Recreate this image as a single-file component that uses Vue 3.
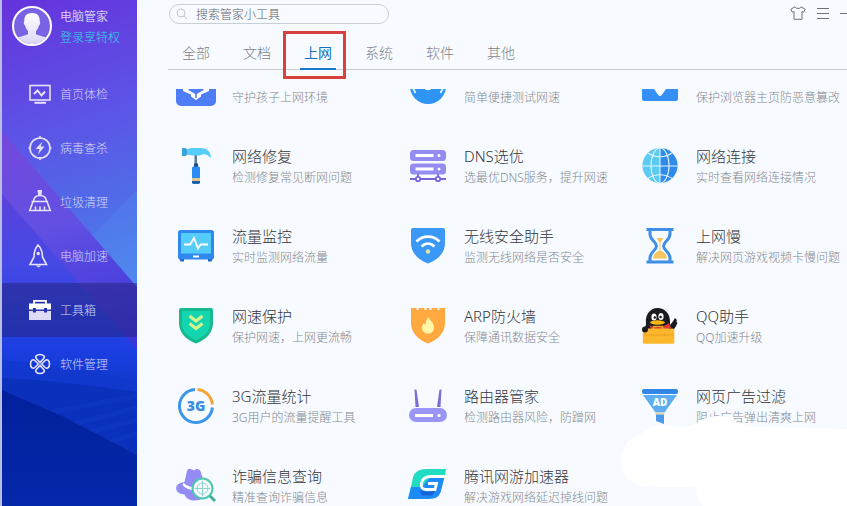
<script setup>
import { ref, onMounted } from 'vue'

const menu = [
  { id: 'check', label: '首页体检' },
  { id: 'virus', label: '病毒查杀' },
  { id: 'clean', label: '垃圾清理' },
  { id: 'boost', label: '电脑加速' },
  { id: 'tools', label: '工具箱' },
  { id: 'apps', label: '软件管理' },
]
const activeMenu = ref('tools')

const tabs = ['全部', '文档', '上网', '系统', '软件', '其他']
const activeTab = ref('上网')

const tools = [
  { id: 'guard', title: '', desc: '守护孩子上网环境' },
  { id: 'speed', title: '', desc: '简单便捷测试网速' },
  { id: 'home', title: '', desc: '保护浏览器主页防恶意篡改' },
  { id: 'hammer', title: '网络修复', desc: '检测修复常见断网问题' },
  { id: 'dns', title: 'DNS选优', desc: '选最优DNS服务，提升网速' },
  { id: 'globe', title: '网络连接', desc: '实时查看网络连接情况' },
  { id: 'monitor', title: '流量监控', desc: '实时监测网络流量' },
  { id: 'wifi', title: '无线安全助手', desc: '监测无线网络是否安全' },
  { id: 'hourglass', title: '上网慢', desc: '解决网页游戏视频卡慢问题' },
  { id: 'shield', title: '网速保护', desc: '保护网速，上网更流畅' },
  { id: 'arp', title: 'ARP防火墙', desc: '保障通讯数据安全' },
  { id: 'qq', title: 'QQ助手', desc: 'QQ加速升级' },
  { id: 'flow', title: '3G流量统计', desc: '3G用户的流量提醒工具' },
  { id: 'router', title: '路由器管家', desc: '检测路由器风险，防蹭网' },
  { id: 'funnel', title: '网页广告过滤', desc: '阻止广告弹出清爽上网' },
  { id: 'fraud', title: '诈骗信息查询', desc: '精准查询诈骗信息' },
  { id: 'game', title: '腾讯网游加速器', desc: '解决游戏网络延迟掉线问题' },
]

const list = ref(null)
onMounted(() => {
  list.value.scrollTop = 43
})
</script>

<template>
  <div class="app">
    <aside class="sidebar">
      <svg class="backdrop" viewBox="0 0 135 506" preserveAspectRatio="none" aria-hidden="true">
        <defs>
          <linearGradient id="base" gradientUnits="userSpaceOnUse" x1="20" y1="0" x2="120" y2="290">
            <stop offset="0" stop-color="#6534dc" />
            <stop offset="0.4" stop-color="#5d52e6" />
            <stop offset="0.75" stop-color="#4f6ee8" />
            <stop offset="1" stop-color="#4d86ec" />
          </linearGradient>
          <linearGradient id="band" gradientUnits="userSpaceOnUse" x1="0" y1="131" x2="60" y2="380">
            <stop offset="0" stop-color="#7448dc" />
            <stop offset="0.4" stop-color="#6250e2" />
            <stop offset="1" stop-color="#3430d8" />
          </linearGradient>
          <linearGradient id="under" gradientUnits="userSpaceOnUse" x1="0" y1="194" x2="0" y2="400">
            <stop offset="0" stop-color="#5c42dc" />
            <stop offset="0.35" stop-color="#4448e4" />
            <stop offset="0.75" stop-color="#1c3ee2" />
            <stop offset="1" stop-color="#0c36c4" />
          </linearGradient>
          <linearGradient id="wave" x1="0" y1="0" x2="0" y2="1">
            <stop offset="0" stop-color="#1338d0" />
            <stop offset="1" stop-color="#0a32b8" />
          </linearGradient>
          <linearGradient id="deep" x1="0" y1="0" x2="0" y2="1">
            <stop offset="0" stop-color="#02209c" />
            <stop offset="1" stop-color="#0428aa" />
          </linearGradient>
        </defs>
        <rect width="135" height="506" fill="url(#base)" />
        <path d="M135 190L90 236L135 287z" fill="#5a9cf4" opacity=".2" />
        <path d="M0 131L135 287V400H0z" fill="url(#band)" />
        <path d="M0 194L135 350V400H0z" fill="url(#under)" />
        <path d="M0 360C50 364 90 372 135 380V506H0z" fill="url(#wave)" />
        <path d="M0 378C50 380 90 386 135 392V506H0z" fill="#0a30bc" />
        <g fill="none" stroke="#1c48cc" stroke-width="5" opacity=".22">
          <path d="M50 412L135 396" />
          <path d="M72 424L135 408" />
          <path d="M88 432L135 420" />
          <path d="M104 442L135 434" />
        </g>
        <path d="M0 390L60 416L135 455V506H0z" fill="url(#deep)" />
      </svg>

      <a class="account" href="#">
        <svg class="avatar" viewBox="0 0 40 40" aria-hidden="true">
          <defs>
            <linearGradient id="face" x1="0" y1="0" x2="0" y2="1">
              <stop offset="0" stop-color="#fff" />
              <stop offset="1" stop-color="#d8d4f6" />
            </linearGradient>
            <clipPath id="round"><circle cx="20" cy="20" r="18" /></clipPath>
          </defs>
          <circle cx="20" cy="20" r="19" fill="#7a62e4" stroke="#fff" stroke-width="2" />
          <g clip-path="url(#round)" fill="url(#face)">
            <path d="M20 7c-6 0-8 3.500-7.700 8.500-1 .5-.4 3.800 1 4.200.5 2.500 1.300 4 2.700 5.300v3C14 30 5 30 2 35v5h36v-5c-3-5-12-5-14-7v-3c1.400-1.300 2.200-2.800 2.700-5.300 1.400-.4 2-3.700 1-4.200C28 10.500 26 7 20 7z" />
          </g>
        </svg>
        <span class="who">
          <span class="name">电脑管家</span>
          <span class="login">登录享特权</span>
        </span>
      </a>

      <nav class="menu">
        <button
          v-for="m in menu"
          :key="m.id"
          type="button"
          class="menu-item"
          :class="{ active: m.id === activeMenu }"
          @click="activeMenu = m.id"
        >
          <svg class="menu-icon" viewBox="0 0 24 24" fill="none" stroke="#e6e2fb" stroke-width="1.600" aria-hidden="true">
            <g v-if="m.id === 'check'">
              <rect x="2" y="3.500" width="20" height="14.500" />
              <path d="M6 12l3.500-3.500 4 5L17 9.500" stroke-width="2" />
              <path d="M6.500 20.800h11.500" stroke-width="2" />
            </g>
            <g v-else-if="m.id === 'virus'">
              <circle cx="12" cy="12" r="10" />
              <path d="M12 0v3M12 21v3M0.500 12h2.500M21 12h2.500" />
              <path d="M14.500 5.500L7.500 13h4l-1.500 5.500 6.500-8h-4z" fill="#e6e2fb" stroke="none" />
            </g>
            <g v-else-if="m.id === 'clean'">
              <path d="M9.500 0h4.500l-.5 5h-3.500z" fill="#e6e2fb" stroke="none" />
              <path d="M5.500 11C6 7.500 8.500 5.500 12 5.500s6 2 6.500 5.500M3.500 11.500h16.500M5 11.500L1.800 20.500h20.500L19 11.500M7.500 20.500v-4M12 20.500v-4M16.500 20.500v-4" />
            </g>
            <g v-else-if="m.id === 'boost'">
              <path d="M10 1C7 4.500 6 8.500 6 13L2 20.500h16.500L14.500 13C14.500 8.500 13.500 4.500 10 1z" />
              <circle cx="10.200" cy="9.500" r="1.700" fill="#e6e2fb" stroke="none" />
              <path d="M7.500 21.500h6l-3 2z" fill="#e6e2fb" stroke="none" />
            </g>
            <g v-else-if="m.id === 'tools'">
              <path d="M6 6V2.800h12V6" stroke="#fff" stroke-width="1.800" />
              <path d="M1 5.500h22v6h-4V10h-3v1.500H8V10H5v1.500H1z" fill="#fff" stroke="none" />
              <path d="M1 13h4v1.500h3V13h8v1.500h3V13h4v9H1z" fill="#dcdcf6" stroke="none" />
            </g>
            <g v-else>
              <path d="M12 10.500L8.500 6.800C6.500 4.500 8.800 2.500 12 2.500s5.500 2 3.500 4.300z" />
              <path d="M12 13.500L8.500 17.200C6.500 19.500 8.800 21.500 12 21.500s5.500-2 3.500-4.300z" />
              <path d="M10.500 12L6.800 8.500C4.500 6.500 2.500 8.800 2.500 12s2 5.500 4.300 3.500z" />
              <path d="M13.500 12L17.200 8.500C19.500 6.500 21.500 8.800 21.500 12s-2 5.500-4.300 3.500z" />
            </g>
          </svg>
          <span>{{ m.label }}</span>
        </button>
      </nav>
    </aside>

    <main class="content">
      <header class="topbar">
        <label class="search">
          <svg class="search-icon" viewBox="0 0 12 12" fill="none" stroke="#c0c5cc" aria-hidden="true">
            <circle cx="5" cy="5" r="4" />
            <path d="M8 8l3 3" />
          </svg>
          <input type="search" placeholder="搜索管家小工具" aria-label="搜索管家小工具" />
        </label>
        <div class="window-actions">
          <button type="button" aria-label="皮肤">
            <svg width="16" height="14" viewBox="0 0 16 14" fill="none" stroke="#6d737b">
              <path d="M5 .8L.8 3.200l1.500 3L4 5.500v7.800h8V5.500l1.700.7 1.500-3L11 .8C10.200 3 5.800 3 5 .8z" />
            </svg>
          </button>
          <button type="button" aria-label="菜单">
            <svg width="12" height="12" viewBox="0 0 12 12" stroke="#6d737b">
              <path d="M0 1.500h12M0 6.500h12M0 11.500h12" />
            </svg>
          </button>
          <button type="button" aria-label="最小化">
            <svg width="7" height="12" viewBox="0 0 7 12" stroke="#6d737b"><path d="M0 6.500h7" /></svg>
          </button>
        </div>
      </header>

      <nav class="tabs">
        <button
          v-for="t in tabs"
          :key="t"
          type="button"
          class="tab"
          :class="{ active: t === activeTab }"
          @click="activeTab = t"
        >{{ t }}</button>
      </nav>

      <section ref="list" class="list">
        <div class="grid">
          <a v-for="t in tools" :key="t.id" class="tool" href="#">
            <svg class="tool-icon" viewBox="0 0 36 36" fill="none" aria-hidden="true">
              <g v-if="t.id === 'guard'">
                <rect x="-2" y="0" width="40" height="38" rx="5" fill="#4e7df6" />
                <path d="M5 16v7l8 3.500v2l5 3.500 5-3.500v-2l8-3.500v-7z" fill="#fff" />
                <path d="M10.500 16v6l7.500 4.500 7.500-4.500v-6z" fill="#4e7df6" />
                <path d="M18 26v4" stroke="#4e7df6" stroke-width="1.500" />
              </g>
              <g v-else-if="t.id === 'speed'">
                <circle cx="18" cy="18" r="18" fill="#2f95f5" />
                <path d="M3 20l2.500 5M33 20l-2.500 5" stroke="#d8f4ff" stroke-width="1.800" />
                <circle cx="18" cy="18.500" r="3" stroke="#fff" stroke-width="1.500" />
              </g>
              <g v-else-if="t.id === 'home'">
                <rect x="0" y="2" width="36" height="31" rx="2.500" fill="#3490f4" />
                <path d="M9 18h18l-3 3-3.500 5c-1.500 2.500-3.500 2.500-5 0L12 21z" fill="#f7fbff" />
              </g>
              <g v-else-if="t.id === 'hammer'">
                <path d="M16.500 7h2.500v9h-2.500z" fill="#5b7d96" />
                <path d="M4 0h3.500l1.800 1.500v5L7.500 8H4z" fill="#39a4dc" />
                <path d="M9 1.500L13 0h10c6 0 10 4 10 10-3-3.500-6-4.500-9-3.500-1 .8-2 1-3.500 1H15L9 6.500z" fill="#56cdf8" />
                <rect x="16" y="15.500" width="4" height="4" fill="#1c4a86" />
                <rect x="14" y="18.500" width="8" height="17.200" rx="1.500" fill="#2b8cf4" />
                <path d="M14 30h8v3h-8z" fill="#e0c890" />
                <path d="M14 33h8v1.500l-1 1.200h-6l-1-1.200z" fill="#1c5ca8" />
              </g>
              <g v-else-if="t.id === 'dns'">
                <rect x="0" y="2" width="36" height="11" rx="3.500" fill="#948cf0" />
                <rect x="0" y="15.500" width="36" height="11" rx="3.500" fill="#948cf0" />
                <path d="M5.500 7.500h18M5.500 21h18" stroke="#fff" stroke-width="3" />
                <circle cx="29" cy="7.500" r="1.500" fill="#fff" />
                <circle cx="29" cy="21" r="1.500" fill="#fff" />
                <path d="M0 31h36M8 26v4M28 26v4" stroke="#7765d8" stroke-width="1.800" />
                <circle cx="8" cy="31" r="2.200" fill="#fff" stroke="#7765d8" stroke-width="1.800" />
                <circle cx="28" cy="31" r="2.200" fill="#fff" stroke="#7765d8" stroke-width="1.800" />
              </g>
              <g v-else-if="t.id === 'globe'">
                <path d="M18 0a17.600 17.600 0 0 0 0 35.200z" fill="#5ccbf2" />
                <path d="M18 0a17.600 17.600 0 0 1 0 35.200z" fill="#2f8aea" />
                <g stroke="#dff6ff" stroke-width="1.100">
                  <path d="M18 0v35.200M0.500 18h35" />
                  <ellipse cx="18" cy="17.600" rx="9" ry="17.600" />
                  <path d="M6 5c7 5 17 5 24 0M6 30.500c7-5 17-5 24 0" />
                </g>
              </g>
              <g v-else-if="t.id === 'monitor'">
                <path d="M1 30h5v3.500H2.500zM30 30h5l-1.500 3.500H30z" fill="#1c68c8" />
                <rect x="0" y="2" width="36" height="29.500" rx="2.500" fill="#2f88ee" />
                <rect x="3" y="5" width="30" height="20.500" fill="#54cdfa" />
                <path d="M6 16.500h6l4-6.500 4 10.500 2.500-4H30" stroke="#fff" stroke-width="1.800" />
                <path d="M15 28.500h6" stroke="#fff" stroke-width="2" />
              </g>
              <g v-else-if="t.id === 'wifi'">
                <path d="M1 2q0-2 2-2h30q2 0 2 2v13c0 10-7 16.500-17 20.500C8 31.500 1 25 1 15z" fill="#3a99f6" />
                <path d="M6.500 13.500c6.500-6.500 16.500-6.500 23 0M11.500 18.500c4-4 9-4 13 0" stroke="#fff" stroke-width="2.600" />
                <circle cx="18" cy="23.500" r="2.200" fill="#dfe3a6" />
              </g>
              <g v-else-if="t.id === 'hourglass'">
                <path d="M8 2v4c0 6 6.500 8 6.500 12S8 24 8 30v4M28 2v4c0 6-6.500 8-6.500 12S28 24 28 30v4" stroke="#3f8fe6" stroke-width="3" />
                <path d="M14.500 10h7l-3 4.500v8c4 1.500 6 4 6.500 8H11c.5-4 2.500-6.500 6.500-8v-8z" fill="#f7c462" />
                <path d="M4.500 0h27v3h-27zM4.500 32.500h27v3h-27z" fill="#3f8fe6" />
              </g>
              <g v-else-if="t.id === 'shield'">
                <path d="M1 2q0-2 2-2h30q2 0 2 2v13c0 10-7 16.500-17 20.500C8 31.500 1 25 1 15z" fill="#17b98e" />
                <path d="M4 3h28v12c0 8-5.500 13.500-14 17.200C9.500 28.500 4 23 4 15z" fill="#14d6ae" />
                <path d="M11.500 8l6.500 5 6.500-5M11.500 15.500l6.500 5 6.500-5" stroke="#d6f58c" stroke-width="3" />
              </g>
              <g v-else-if="t.id === 'arp'">
                <path d="M1 0h5.500v2h2V0h6v2h2V0h3v2h2V0h6v2h2V0H35v15c0 10-7 16.500-17 20.500C8 31.500 1 25 1 15z" fill="#ffa940" />
                <path d="M18.500 9c.5 3 5.500 5 5.500 10.500 0 4-3 6-6 6s-6-2-6-6c0-2 1-3.500 2-4.500.3 1 .8 1.500 1.500 1.500C16 14 16 11 18.500 9z" fill="#fff6a8" />
              </g>
              <g v-else-if="t.id === 'qq'">
                <path d="M25 19c4-2 6-6 8-9 2 1 2 3 1.500 4l1 1-2 4c-2 3-4 4-6 4z" fill="#191b20" />
                <path d="M2 22C3 19 4 18 4 15 3 7 8 0 15.500 0S28 6 28 13v9z" fill="#191b20" />
                <path d="M7 17c6 3.500 14 3 20-2l2 4.500-5 2.500H10z" fill="#e03a34" />
                <ellipse cx="12" cy="9" rx="2.600" ry="3.600" fill="#fff" />
                <ellipse cx="19" cy="8.500" rx="2.600" ry="3.600" fill="#fff" />
                <circle cx="12.800" cy="9.500" r="1.200" fill="#111" />
                <circle cx="18.600" cy="9" r="1.200" fill="#111" />
                <ellipse cx="15.500" cy="14.500" rx="7.500" ry="2.200" fill="#fdb813" />
                <path d="M11.500 21v-2.500h9V21" stroke="#f0a020" stroke-width="1.500" />
                <rect x=".8" y="20.500" width="31.500" height="15.200" rx="1.500" fill="#fcb82c" />
                <path d="M1 27h31M9.500 25.500v3M22.500 25.500v3" stroke="#e8a020" stroke-width="1" />
                <circle cx="3" cy="21.500" r="3" fill="#191b20" />
              </g>
              <g v-else-if="t.id === 'flow'">
                <path d="M17 1.500A16.500 16.500 0 1 0 34.400 19.500" stroke="#3c96e8" stroke-width="3" />
                <path d="M19.500 1.500A16.500 16.500 0 0 1 34.400 16.500" stroke="#f5a43a" stroke-width="3" />
                <text x="18" y="23" text-anchor="middle" class="badge blue">3G</text>
              </g>
              <g v-else-if="t.id === 'router'">
                <path d="M4.500 1.500h2L9 19H5.500zM29.500 1.500h2L30.500 19H27z" fill="#7d6cd8" />
                <rect x="-1" y="20" width="38" height="14" rx="7" fill="#9b95f8" />
                <path d="M5 27.500h18" stroke="#fff" stroke-width="3" />
                <circle cx="29" cy="27.500" r="1.600" fill="#fff" />
              </g>
              <g v-else-if="t.id === 'funnel'">
                <rect x="0" y="1" width="36" height="5" rx="2" fill="#3088e4" />
                <path d="M1 7h34L22.500 24.500h-9z" fill="#5dadf2" />
                <path d="M13.500 24.500h9v2h-9z" fill="#e6d8a0" />
                <path d="M14 26.500h8V36l-8-3z" fill="#4a9ae8" />
                <text x="18" y="18" text-anchor="middle" class="badge white">AD</text>
              </g>
              <g v-else-if="t.id === 'fraud'">
                <path d="M6 14C0 15-3 18-1.500 22c1 3 4.500 4 8 4.500C8 30 11 32.500 16 32.500c4 0 8-1 10-4L24 12z" fill="#948cf4" />
                <path d="M9 3c1-3.500 3.500-2.500 7-.5 3-2 5-2 6.500 1L26 14c-4 7-15 8-20 2z" fill="#948cf4" />
                <path d="M5.500 14.500c4 5 12 6 18 2l1 2.500c-6 4.500-15 4-20-2z" fill="#f7fbff" />
                <path d="M31 27l6 6" stroke="#3fae9c" stroke-width="3" />
                <circle cx="24.500" cy="20.500" r="10" fill="#f3fbfd" stroke="#4fc4b0" stroke-width="2" />
                <circle cx="24.500" cy="20.500" r="5.500" stroke="#8fcfd0" stroke-width="1" />
                <path d="M24.500 12.500v16M16.500 20.500h16" stroke="#8fcfd0" stroke-width="1" />
              </g>
              <g v-else>
                <path d="M36 1H17C7 1 3.500 5 2.500 12L-2 31h16L30 20 35 8z" fill="#20dcc0" />
                <path d="M1 19l-3 12h20c9 0 12-3 13.500-10L34.500 9H20l-8 10z" fill="#1e8cf8" />
                <path d="M9 22c5 2 12 2 17 0l-4 5.500H12z" fill="#1764d8" />
                <path d="M37 8.500H21c-6 0-8.500 2-9.500 6.500-.8 4 .5 6.500 4.500 6.500H25L26.500 15.500H18" stroke="#fff" stroke-width="2.800" />
              </g>
            </svg>
            <span class="tool-text">
              <strong class="title">{{ t.title }}</strong>
              <span class="desc">{{ t.desc }}</span>
            </span>
          </a>
        </div>
      </section>
    </main>

    <svg class="cloud" viewBox="0 0 226 90" fill="#fff" aria-hidden="true">
      <path d="M30 71C12 71 0 60 0 46 0 31 10 20 22 17c8-8 20-9 30-7 8 2 18 1 26-4 8-7 30-8 38 0 5 4 12 5 22 5l88 2v77H82c-4-4-6-10-8-19z" />
    </svg>
  </div>
</template>

<style>
body {
  margin: 0;
  background: #f7fbff;
}
</style>

<style scoped>
.app {
  position: relative;
  display: flex;
  height: 100vh;
  overflow: hidden;
  background: #f7fbff;
  font-family: "Noto Sans", "Noto Sans CJK SC", sans-serif;
  font-size: 12px;
  font-weight: 300;
  color: #4a4e54;
}
button {
  padding: 0;
  border: 0;
  background: none;
  font: inherit;
  color: inherit;
  cursor: pointer;
}
a {
  color: inherit;
  text-decoration: none;
}
svg {
  display: block;
  flex: none;
}

.sidebar {
  position: relative;
  flex: none;
  box-sizing: border-box;
  width: 137px;
  border-left: 2px solid #b9bde0;
}
.backdrop {
  position: absolute;
  inset: 0;
  width: 100%;
  height: 100%;
}
.account {
  position: relative;
  display: flex;
  gap: 8px;
  box-sizing: border-box;
  height: 67px;
  padding: 6px 0 0 10px;
}
.avatar {
  width: 40px;
  height: 40px;
}
.who {
  display: flex;
  flex-direction: column;
  line-height: 21px;
}
.name {
  color: #fff;
}
.login {
  color: #2fd6e6;
}
.menu {
  position: relative;
  display: flex;
  flex-direction: column;
}
.menu-item {
  display: flex;
  align-items: center;
  gap: 8px;
  height: 54px;
  padding-left: 26px;
  color: #d6d4f8;
}
.menu-item.active {
  background: rgba(34, 34, 120, 0.5);
}
.menu-icon {
  width: 24px;
  height: 24px;
}

.content {
  flex: 1;
  min-width: 0;
  display: flex;
  flex-direction: column;
}
.topbar {
  display: flex;
  align-items: flex-start;
  justify-content: space-between;
  height: 35px;
  padding-left: 32px;
}
.search {
  display: flex;
  align-items: center;
  gap: 8px;
  box-sizing: border-box;
  width: 220px;
  height: 20px;
  margin-top: 4px;
  padding: 0 8px 0 6px;
  border: 1px solid #c9cfd6;
  border-radius: 10px;
}
.search-icon {
  width: 12px;
  height: 12px;
}
.search input {
  flex: 1;
  min-width: 0;
  padding: 0;
  border: 0;
  outline: 0;
  background: none;
  font: inherit;
  color: #5c6168;
}
.search input::placeholder {
  color: #5c6168;
  opacity: 1;
}
.window-actions {
  display: flex;
  align-items: center;
  gap: 11px;
  padding-top: 6px;
}
.tabs {
  position: relative;
  z-index: 1;
  display: flex;
  gap: 25px;
  height: 34px;
  margin-left: 31px;
  padding-left: 10px;
  border-bottom: 1px solid #c8ccd2;
}
.tab {
  position: relative;
  height: 35px;
  padding: 0 4px;
  border-bottom: 2px solid transparent;
  font-size: 14px;
  color: #7d8289;
}
.tab.active {
  border-color: #1c78cc;
  font-weight: 400;
  color: #1670c4;
}
.tab.active::after {
  content: "";
  position: absolute;
  inset: -4px -10px -11px -17px;
  border: 3px solid #d84040;
}

.list {
  flex: 1;
  min-height: 0;
  margin-top: 19px;
  padding-left: 41px;
  overflow: auto;
  scrollbar-width: none;
}
.grid {
  display: grid;
  grid-template-columns: minmax(0, 232fr) minmax(0, 232fr) minmax(0, 205fr);
  grid-auto-rows: 80px;
}
.tool {
  display: flex;
  align-items: center;
  gap: 18px;
}
.tool-icon {
  width: 36px;
  height: 36px;
  overflow: visible;
}
.tool-text {
  display: flex;
  flex-direction: column;
  white-space: nowrap;
}
.title {
  height: 24px;
  font-size: 15px;
  font-weight: 300;
  line-height: 24px;
  color: #33373c;
}
.desc {
  line-height: 20px;
  color: #858990;
}
.badge {
  font-family: "Open Sans", sans-serif;
  font-weight: 800;
}
.badge.blue {
  font-size: 14px;
  fill: #3c8ee0;
}
.badge.white {
  font-size: 10px;
  fill: #fff;
}
.cloud {
  position: absolute;
  right: 0;
  bottom: 0;
  width: 226px;
  height: 90px;
  pointer-events: none;
}
</style>
